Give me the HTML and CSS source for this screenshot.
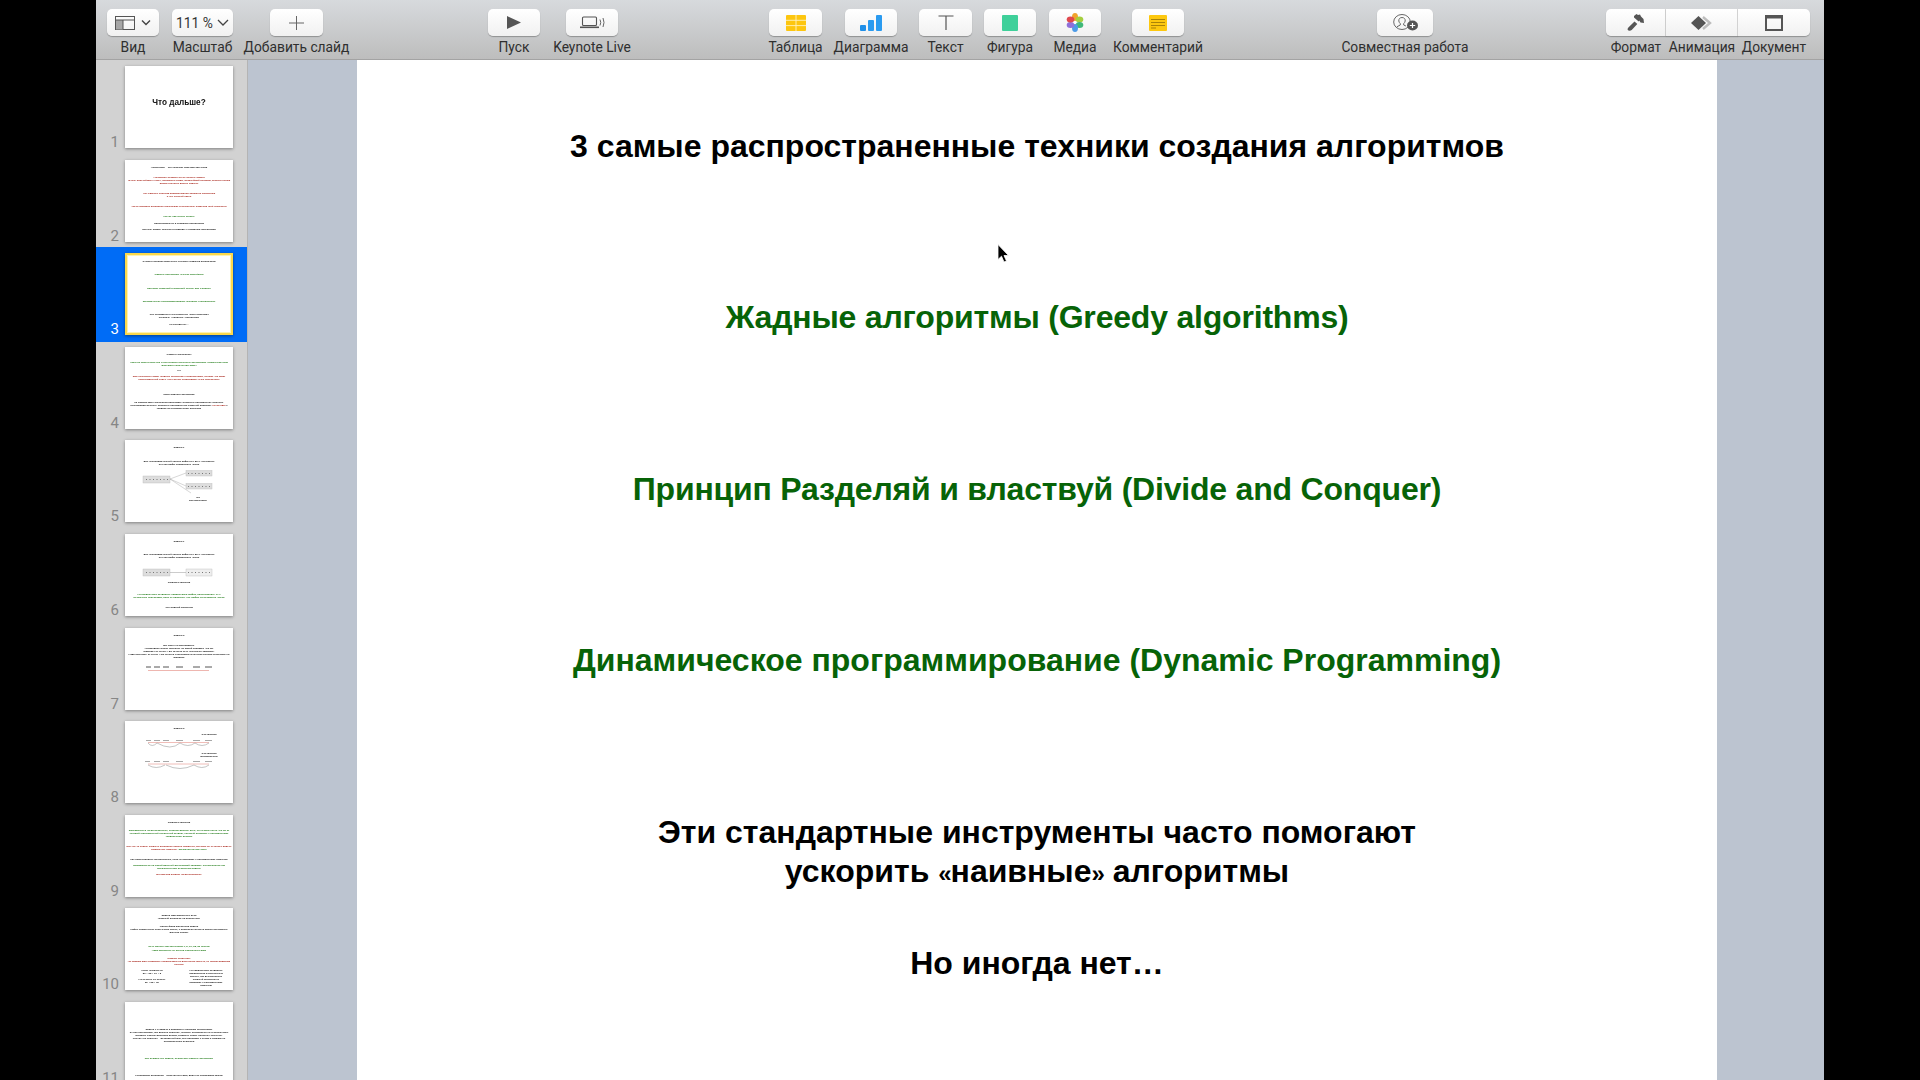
FILE: index.html
```html
<!DOCTYPE html>
<html lang="ru">
<head>
    <meta charset="UTF-8">
    <meta name="viewport" content="width=device-width, initial-scale=1.0">
    <title>Keynote</title>
    <link rel="stylesheet" href="styles.css">
</head>
<body>
    <div class="app">
        <header class="toolbar">
            <div class="tool w52">
                <div class="btn view-btn">
                    <svg width="20" height="14" viewBox="0 0 20 14"><rect x="0.500" y="0.500" width="19" height="13" fill="none" stroke="#555" stroke-width="1"/><rect x="1" y="4" width="7" height="9.500" fill="#a6a6a6"/><path d="M0.500 4h19M8 4v9.500" stroke="#555" stroke-width="1"/></svg>
                    <svg width="10" height="7" viewBox="0 0 10 7"><path d="M1 1.500l4 4 4-4" fill="none" stroke="#444" stroke-width="1.400"/></svg>
                </div>
                <span>Вид</span>
            </div>
            <div class="tool w61 ml13">
                <div class="btn zoom-btn">111 %<svg width="12" height="7" viewBox="0 0 12 7"><path d="M1 1l5 5 5-5" fill="none" stroke="#444" stroke-width="1.300"/></svg></div>
                <span>Масштаб</span>
            </div>
            <div class="tool w53 ml37">
                <div class="btn">
                    <svg width="15" height="14" viewBox="0 0 15 14"><path d="M7.500 0v14M0 7h15" stroke="#666" stroke-width="1"/></svg>
                </div>
                <span>Добавить слайд</span>
            </div>

            <div class="tool w52 ml165">
                <div class="btn">
                    <svg width="14" height="13" viewBox="0 0 14 13"><path d="M0 0l14 6.500L0 13z" fill="#555"/></svg>
                </div>
                <span>Пуск</span>
            </div>
            <div class="tool w52 ml26">
                <div class="btn">
                    <svg width="25" height="13" viewBox="0 0 25 13"><rect x="2.500" y="1" width="14" height="8.500" rx="1" fill="none" stroke="#555" stroke-width="1.100"/><path d="M0 11.300h19" stroke="#555" stroke-width="1.600"/><path d="M20 3.500q1.500 3 0 6M23 2q2 4.500 0 9" fill="none" stroke="#666" stroke-width="1"/></svg>
                </div>
                <span>Keynote Live</span>
            </div>

            <div class="tool w53 ml151">
                <div class="btn">
                    <svg width="20" height="16" viewBox="0 0 20 16"><rect width="20" height="16" rx="1" fill="#fdc60f"/><path d="M0 5.300h20M0 10.600h20M10 0v16" stroke="#fff3c0" stroke-width="0.900"/></svg>
                </div>
                <span>Таблица</span>
            </div>
            <div class="tool w52 ml23">
                <div class="btn">
                    <svg width="22" height="16" viewBox="0 0 22 16"><rect y="10" width="6" height="6" rx="1" fill="#1f8fe8"/><rect x="8" y="5" width="6" height="11" rx="1" fill="#2a9bf0"/><rect x="16" y="0" width="6" height="16" rx="1" fill="#2a9bf0"/></svg>
                </div>
                <span>Диаграмма</span>
            </div>
            <div class="tool w53 ml22">
                <div class="btn">
                    <svg width="16" height="15" viewBox="0 0 16 15"><path d="M0.500 1h15M8 1v14" stroke="#555" stroke-width="1.200"/></svg>
                </div>
                <span>Текст</span>
            </div>
            <div class="tool w52 ml12">
                <div class="btn">
                    <svg width="16" height="16" viewBox="0 0 16 16"><rect width="16" height="16" rx="1" fill="#3fd09a"/></svg>
                </div>
                <span>Фигура</span>
            </div>
            <div class="tool w52 ml13">
                <div class="btn">
                    <svg width="18" height="19" viewBox="0 0 18 19">
                        <ellipse cx="9" cy="4" rx="3" ry="4" fill="#f0a32c"/>
                        <ellipse cx="13.500" cy="6.500" rx="3.800" ry="3" fill="#a5cf3e"/>
                        <ellipse cx="13.500" cy="12" rx="3.800" ry="3" fill="#3fb878"/>
                        <ellipse cx="9" cy="15" rx="3" ry="4" fill="#4c9be8"/>
                        <ellipse cx="4.500" cy="12" rx="3.800" ry="3" fill="#8f6fd8"/>
                        <ellipse cx="4.500" cy="6.500" rx="3.800" ry="3" fill="#e0484e"/>
                        <circle cx="9" cy="9.500" r="1.300" fill="#fff"/>
                    </svg>
                </div>
                <span>Медиа</span>
            </div>
            <div class="tool w52 ml31">
                <div class="btn">
                    <svg width="18" height="16" viewBox="0 0 18 16"><rect width="18" height="16" rx="1" fill="#fdc80f"/><path d="M2 4.500h14M2 7.500h14M2 10.500h14M2 13h5" stroke="#a07b08" stroke-width="0.900"/></svg>
                </div>
                <span>Комментарий</span>
            </div>

            <div class="tool w56 ml193">
                <div class="btn">
                    <svg width="25" height="17" viewBox="0 0 25 17"><ellipse cx="9" cy="8" rx="8.300" ry="7.500" fill="none" stroke="#666" stroke-width="1"/><path d="M9 3.500c-2.200 0-3.400 1.500-3.200 3.500.1 1.200.9 2 1.500 2.600v1.400l-3.400 1.800M9 3.500c2.200 0 3.400 1.500 3.200 3.500-.1 1.200-.9 2-1.500 2.600v1.400l2.200 1" fill="none" stroke="#666" stroke-width="1"/><ellipse cx="19.500" cy="11.500" rx="5.500" ry="5" fill="#555"/><path d="M19.500 9v5M16.800 11.500h5.400" stroke="#fff" stroke-width="1.200"/></svg>
                </div>
                <span>Совместная работа</span>
            </div>

            <div class="inspector ml173">
                <div class="tool w60">
                    <div class="btn seg">
                        <svg width="18" height="18" viewBox="0 0 18 18"><path d="M7 2l2.500-2 1.500 1 2-.5 1 2 2.500 2.500.5 4-3.500-.5-1.200-2-.6 1-4.700-4zM7.500 7.500l2.800 2.500-5.600 6c-1.100 1-3.400 1-3.900 0s0-2 1.100-3z" fill="#555"/></svg>
                    </div>
                    <span>Формат</span>
                </div>
                <div class="tool w72">
                    <div class="btn seg">
                        <svg width="21" height="14" viewBox="0 0 21 14"><path d="M12 1l7 6-7 6" fill="none" stroke="#bdbdbd" stroke-width="2.400"/><path d="M7.500 0l7.500 7-7.500 7L0 7z" fill="#555"/></svg>
                    </div>
                    <span>Анимация</span>
                </div>
                <div class="tool w72">
                    <div class="btn seg-last">
                        <svg width="18" height="16" viewBox="0 0 18 16"><rect x="1" y="1" width="16" height="14" fill="none" stroke="#555" stroke-width="2"/><rect x="1" y="1" width="16" height="2.500" fill="#555"/></svg>
                    </div>
                    <span>Документ</span>
                </div>
            </div>
        </header>

        <div class="workspace">
            <aside class="sidebar">
                <div class="row">
                    <span class="num">1</span>
                    <div class="thumb thumb-title">Что дальше?</div>
                </div>

                <div class="row">
                    <span class="num">2</span>
                    <div class="thumb pt8">
                        <p>Алгоритмы – это сложная тема для обучения</p>
                        <p class="red mt7">Алгоритмы решают очень разные задачи</p>
                        <p class="red">(очень простейшие к горы, наглядные виды, мощнейший перевод, анализ генома</p>
                        <p class="red">время и многое другое задачи)</p>
                        <p class="red mt7">Нет единого способа придумывания хорошего алгоритма</p>
                        <p class="red">и нет строгой науки</p>
                        <p class="red mt7">Часто хорошие алгоритмы возникают в результате озарения (first principles)</p>
                        <p class="green mt7">Как же научиться этому?</p>
                        <p class="mt4">Практиковаться в создании алгоритмов</p>
                        <p class="mt3">Изучать общие техники и подходы к созданию алгоритмов</p>
                    </div>
                </div>

                <div class="row selected">
                    <span class="num">3</span>
                    <div class="thumb thumb-current">
                        <p>3 самые распространенные техники создания алгоритмов</p>
                        <p class="green mt10">Жадные алгоритмы (Greedy algorithms)</p>
                        <p class="green mt10">Принцип Разделяй и властвуй (Divide and Conquer)</p>
                        <p class="green mt10">Динамическое программирование (Dynamic Programming)</p>
                        <p class="mt10">Эти стандартные инструменты часто помогают</p>
                        <p>ускорить «наивные» алгоритмы</p>
                        <p class="mt4">Но иногда нет…</p>
                    </div>
                </div>

                <div class="row">
                    <span class="num">4</span>
                    <div class="thumb pt6">
                        <p>Жадные алгоритмы</p>
                        <p class="green mt5">Одни из самых простых и интуитивно понятных алгоритмов. Применимы для</p>
                        <p class="green">большого количества задач</p>
                        <p class="mt2">НО</p>
                        <p class="red mt3">Для некоторых задач Жадные алгоритмы неприменимы, потому что дают</p>
                        <p class="red">неоптимальный ответ. Эти случаи необходимо четко определять</p>
                        <p class="mt12">Идея жадного алгоритма</p>
                        <p class="mt5">На каждом шаге алгоритма принимать локально оптимальное решение.</p>
                        <p>Последовательность локально оптимальных решений приведет <span class="red">(не всегда)</span> к</p>
                        <p>глобально оптимальному решению</p>
                    </div>
                </div>

                <div class="row">
                    <span class="num">5</span>
                    <div class="thumb pt6">
                        <p>Задача 1</p>
                        <p class="mt10">Дан неупорядоченный список цифр от 0 до 9. Составить</p>
                        <p>из этих цифр наибольшее число</p>
                        <svg class="diagram" width="108" height="27" viewBox="0 0 108 27">
                            <rect x="18" y="7" width="27" height="7" fill="#ddd" stroke="#bbb" stroke-width="0.400"/>
                            <rect x="61" y="1.500" width="26" height="5.500" fill="#ddd" stroke="#bbb" stroke-width="0.400"/>
                            <rect x="61" y="14.500" width="26" height="5.500" fill="#ddd" stroke="#bbb" stroke-width="0.400"/>
                            <path d="M45 10L61 4M45 10L61 17M45 10L66 24" stroke="#999" stroke-width="0.400"/>
                            <path d="M21 10.500h22M63 4.500h22M63 17.500h22" stroke="#777" stroke-width="1" stroke-dasharray="1 2.500"/>
                        </svg>
                        <p class="tiny-right">нет</p>
                        <p class="tiny-right">альтернативы</p>
                    </div>
                </div>

                <div class="row">
                    <span class="num">6</span>
                    <div class="thumb pt6">
                        <p>Задача 1</p>
                        <p class="mt10">Дан неупорядоченный список цифр от 0 до 9. Составить</p>
                        <p>из этих цифр наибольшее число</p>
                        <svg class="diagram mt9" width="108" height="9" viewBox="0 0 108 9">
                            <rect x="18" y="1" width="27" height="7" fill="#ddd" stroke="#bbb" stroke-width="0.400"/>
                            <rect x="61" y="1" width="26" height="7" fill="#eee" stroke="#bbb" stroke-width="0.400"/>
                            <path d="M45 4.500H61" stroke="#999" stroke-width="0.500"/>
                            <path d="M21 4.500h22M63 4.500h22" stroke="#777" stroke-width="1" stroke-dasharray="1 2.500"/>
                        </svg>
                        <p class="mt4">Жадная стратегия</p>
                        <p class="green mt9">На каждом шаге выбирать наибольшую цифру, присоединять ее к</p>
                        <p class="green">результату перемещая, пока не удалятся. Эту цифру из исходного числа</p>
                        <p class="mt7">Это жадный алгоритм</p>
                    </div>
                </div>

                <div class="row">
                    <span class="num">7</span>
                    <div class="thumb pt6">
                        <p>Задача 3</p>
                        <p class="mt7">Вы едете на автомобиле.</p>
                        <p>Автомобиль может проехать на одной заправке 400 км.</p>
                        <p>Маршрут от точки A до точки B есть несколько заправок.</p>
                        <p>Надо проехать от точки A до точки B и минимальным количеством остановок на</p>
                        <p>заправку.</p>
                        <svg class="diagram mt7" width="108" height="6" viewBox="0 0 108 6">
                            <path d="M23 4.500H84" stroke="#eeb6b0" stroke-width="1.200"/>
                            <path d="M21 1h5M29 1h6M38 1h6M51 1h7M68 1h7M80 1h7" stroke="#555" stroke-width="1"/>
                        </svg>
                    </div>
                </div>

                <div class="row">
                    <span class="num">8</span>
                    <div class="thumb pt6">
                        <p>Задача 3</p>
                        <p class="side-note mt3">3 остановки</p>
                        <svg class="diagram mt4" width="108" height="9" viewBox="0 0 108 9">
                            <path d="M23 2.500H84" stroke="#eeb6b0" stroke-width="0.900"/>
                            <path d="M21 0h5M29 0h6M38 0h6M51 0h7M68 0h7M80 0h7" stroke="#555" stroke-width="1"/>
                            <path d="M23 3q4 5 9 0M32 3q14 8 23 0M55 3q8 5 15 0M70 3q7 5 14 0" fill="none" stroke="#888" stroke-width="0.500"/>
                        </svg>
                        <p class="side-note mt3">3 остановки</p>
                        <p class="side-note">(оптимальное)</p>
                        <svg class="diagram" width="108" height="10" viewBox="0 0 108 10">
                            <path d="M23 3H84" stroke="#eeb6b0" stroke-width="0.900"/>
                            <path d="M20 0h5M29 0h6M38 0h6M51 0h7M68 0h7M80 0h7" stroke="#555" stroke-width="1"/>
                            <path d="M23 4q8 5 17 0M41 4q14 7 28 0M69 4q8 5 15 0" fill="none" stroke="#888" stroke-width="0.500"/>
                        </svg>
                    </div>
                </div>

                <div class="row">
                    <span class="num">9</span>
                    <div class="thumb pt6">
                        <p>Жадная стратегия</p>
                        <p class="green mt5">Заправляться на бензоколонке, которая дальше всех, но на дальности 400 км от</p>
                        <p class="green">текущей (оптимальный локальный выбор), который приведет к оптимальному</p>
                        <p class="green">глобальному выбору</p>
                        <p class="red mt7">Мы что-то знаем: Жадные алгоритмы можно подвести, поэтому он не может видеть</p>
                        <p class="red">глобальное решение. <span class="green">Заключительная часть</span></p>
                        <p class="mt7">Как гарантировать бензоколонку, если не приводит к оптимальному решению</p>
                        <p class="green mt3">Заправляться на самой дальней достижимой заправке. Бензоколонка как</p>
                        <p class="green">доказательство результата задачи</p>
                        <p class="red mt3">Всегда жив бывает на бензоколонке</p>
                    </div>
                </div>

                <div class="row">
                    <span class="num">10</span>
                    <div class="thumb pt6">
                        <p>Задача максимального веса</p>
                        <p>(Жадный алгоритм на положение)</p>
                        <p class="mt5">Простейшая рюкзачная задача</p>
                        <p>(найти наименьшее количество монет, с помощью которых можно расплатить</p>
                        <p>данную сумму)</p>
                        <p class="green mt10">Есть монеты достоинством 1, 5, 10, 25, 50 центов</p>
                        <p class="green mt1">Надо заплатить 99 центов самым меньшим</p>
                        <p class="red mt5">Жадная стратегия:</p>
                        <p class="red">На каждом шаге выбирать наибольшую из доступных монету, не превосходящую</p>
                        <p class="red">остаток</p>
                        <div class="cols mt3">
                            <div>
                                <p>Ответ (Жадность)</p>
                                <p>50 + 25 + 10 + 5</p>
                                <p class="mt3">На остаток (не верно)</p>
                                <p>50 + 25 + 20</p>
                            </div>
                            <div>
                                <p>На каждом шаге выбирать</p>
                                <p>наибольшую из доступных</p>
                                <p>монету, где бензоколонка</p>
                                <p>Жадный алгоритм не</p>
                                <p>приводит к оптимальному</p>
                                <p>решению</p>
                            </div>
                        </div>
                    </div>
                </div>

                <div class="row">
                    <span class="num">11</span>
                    <div class="thumb pt26">
                        <p>Задача 1 и Задача 3 приводят к похожим алгоритмам.</p>
                        <p>В этих алгоритмах, где должно решение, которое оптимально на текущем шаге</p>
                        <p>выбрать самым большим выбор, выбрать самое полезное значение.</p>
                        <p>Так как это решение – безопасный шаг, оно приводит к этому и глобально</p>
                        <p>оптимальному решению</p>
                        <p class="green mt14">Мы решаем эти задачи, используя Жадные алгоритмы</p>
                        <p class="mt14">Реализация алгоритма – получается сама, будет из следующих шагов</p>
                    </div>
                </div>
            </aside>

            <main class="canvas">
                <section class="slide">
                    <h1>3 самые распространенные техники создания алгоритмов</h1>
                    <h2 class="tight">Жадные алгоритмы (Greedy algorithms)</h2>
                    <h2 class="tight">Принцип Разделяй и властвуй (Divide and Conquer)</h2>
                    <h2>Динамическое программирование (Dynamic Programming)</h2>
                    <p class="note">Эти стандартные инструменты часто помогают<br>ускорить <span class="quote">«</span>наивные<span class="quote">»</span> алгоритмы</p>
                    <p class="note-last">Но иногда нет…</p>
                </section>
            </main>
        </div>

        <svg class="cursor" width="12" height="19" viewBox="0 0 12 19"><path d="M1 0.500v15l3.500-3.300 2.500 5.800 2.500-1-2.500-5.500h4.500z" fill="#000" stroke="#fff" stroke-width="0.800"/></svg>
    </div>
</body>
</html>
```
FILE: styles.css
```css
* {
    box-sizing: border-box;
}

html, body {
    margin: 0;
    height: 100%;
    overflow: hidden;
    background-color: #000;
}

.app {
    position: relative;
    width: 1728px;
    height: 1080px;
    margin: 0 96px;
    font-family: Roboto, "Liberation Sans", sans-serif;
    overflow: hidden;
}

/* toolbar */
.toolbar {
    display: flex;
    height: 60px;
    padding: 9px 0 0 11px;
    background: linear-gradient(#d7dadd, #bdbdbd);
    border-bottom: 1px solid #a3a3a3;
}

.tool {
    display: flex;
    flex-direction: column;
    align-items: center;
    flex: none;
}

.tool span {
    margin-top: 4px;
    font-size: 13.800px;
    line-height: 15px;
    color: #2f2f2f;
    white-space: nowrap;
}

.btn {
    display: flex;
    align-items: center;
    justify-content: center;
    width: 100%;
    height: 27px;
    background: linear-gradient(#ffffff, #f1f1f1);
    border-radius: 5px;
    box-shadow: 0 1px 1px rgba(0, 0, 0, 0.28);
}

.view-btn {
    gap: 6px;
}

.zoom-btn {
    gap: 4px;
    font-size: 13.800px;
    color: #333;
}

.w52 { width: 52px; }
.w53 { width: 53px; }
.w56 { width: 56px; }
.w60 { width: 60px; }
.w61 { width: 61px; }
.w72 { width: 72px; }

.ml12 { margin-left: 12px; }
.ml13 { margin-left: 13px; }
.ml22 { margin-left: 22px; }
.ml23 { margin-left: 23px; }
.ml26 { margin-left: 26px; }
.ml31 { margin-left: 31px; }
.ml37 { margin-left: 37px; }
.ml151 { margin-left: 151px; }
.ml165 { margin-left: 165px; }
.ml173 { margin-left: 173px; }
.ml193 { margin-left: 193px; }

.inspector {
    display: flex;
}

.seg {
    border-radius: 0;
    border-right: 1px solid #d8d8d8;
}

.inspector .tool:first-child .seg {
    border-radius: 5px 0 0 5px;
}

.seg-last {
    border-radius: 0 5px 5px 0;
}

/* slides list */
.workspace {
    display: flex;
    height: 1020px;
}

.sidebar {
    flex: none;
    width: 152px;
    background-color: #d2d2d2;
    border-right: 1px solid #b4b4b4;
    overflow: hidden;
}

.row {
    display: flex;
    align-items: flex-end;
    height: 93.6px;
    padding: 6px 0 5.6px 0;
}

.selected {
    background-color: #006cf6;
    box-shadow: 0 1px 0 #006cf6;
    position: relative;
}

.num {
    flex: none;
    width: 29px;
    padding-right: 6px;
    margin-bottom: -2px;
    font-size: 15px;
    line-height: 16px;
    text-align: right;
    color: #868686;
}

.selected .num {
    color: #fff;
}

.thumb {
    flex: none;
    width: 108px;
    height: 82px;
    background-color: #fff;
    box-shadow: 0 1px 3px rgba(0, 0, 0, 0.4);
    font-family: "Liberation Sans", sans-serif;
    font-size: 2.500px;
    font-weight: bold;
    line-height: 3px;
    text-align: center;
    color: #111;
    overflow: hidden;
    filter: blur(0.25px);
}

.thumb p {
    margin: 0;
}

.thumb-title {
    padding-top: 13px;
    font-size: 8.200px;
    line-height: 48px;
}

.thumb-current {
    padding-top: 5px;
    border: 2px solid #fbd84c;
    box-shadow: 0 1px 3px rgba(0, 0, 0, 0.4), inset 0 0 0 1px #fff3b0;
}

.red { color: #a51d12; }
.green { color: #1d7a14; }

.pt6 { padding-top: 6px; }
.pt8 { padding-top: 6.500px; }
.pt26 { padding-top: 26px; }

.diagram {
    display: block;
    margin-top: 3px;
}

.mt1 { margin-top: 1px !important; }
.mt2 { margin-top: 2px !important; }
.mt3 { margin-top: 3px !important; }
.mt4 { margin-top: 4px !important; }
.mt5 { margin-top: 5px !important; }
.mt7 { margin-top: 7px !important; }
.mt9 { margin-top: 9px !important; }
.mt10 { margin-top: 10.300px !important; }
.mt12 { margin-top: 12px !important; }
.mt14 { margin-top: 14px !important; }

.tiny-right {
    padding-left: 38px;
}

.side-note {
    padding-left: 60px;
}

.cols {
    display: grid;
    grid-template-columns: 1fr 1fr;
}

/* slide on the canvas */
.canvas {
    flex: 1;
    padding-left: 109px;
    background-color: #bcc4d0;
}

.slide {
    width: 1360px;
    height: 1020px;
    padding-top: 66.500px;
    background-color: #fff;
    font-family: "Liberation Sans", sans-serif;
    font-size: 32px;
    font-weight: bold;
    line-height: 39px;
    text-align: center;
    color: #000;
}

.slide h1, .slide h2, .slide p {
    margin: 0;
    font-size: inherit;
    line-height: inherit;
}

.slide h2 {
    margin-top: 132.500px;
    color: #076307;
}

.slide .tight {
    letter-spacing: -0.2px;
}

.slide .note {
    margin-top: 132.500px;
}

.slide .note-last {
    margin-top: 53px;
}

.quote {
    font-size: 24px;
    line-height: 1;
    letter-spacing: -1px;
}

.cursor {
    position: absolute;
    left: 901px;
    top: 244px;
}
```
